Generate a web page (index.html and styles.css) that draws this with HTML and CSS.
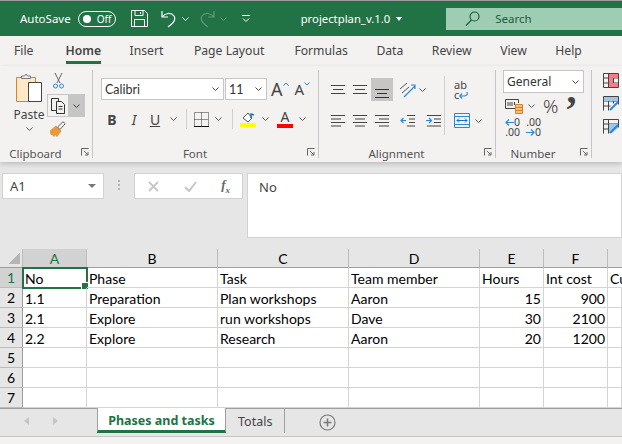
FILE: index.html
```html
<!DOCTYPE html>
<html lang="en">

<head>
  <meta charset="UTF-8">
  <title>projectplan_v.1.0</title>
  <link rel="stylesheet" href="styles.css">
</head>

<body>
  <div class="titlebar">
    <span class="autosave">AutoSave</span>
    <span class="toggle"><i class="toggle-dot"></i>Off</span>
    <svg class="ic-save" width="17" height="17" viewBox="0 0 17 17" fill="none" stroke="#fff"><path d="M.5.5h13l3 3v13H.5zM4 .5v5h8v-5M3.500 16.500v-7h10v7M9.500 2v2"/></svg>
    <svg class="ic-undo" width="16" height="18" viewBox="0 0 16 18" fill="none" stroke="#fff" stroke-width="1.2"><path d="M1 1v6h6M1 7c3-4 9-5 12-1 2 3 1 6-6 11"/></svg>
    <svg class="ic-chev" width="7" height="4" viewBox="0 0 7 4" fill="none" stroke="#fff"><path d="M.5.500l3 3 3-3"/></svg>
    <svg class="ic-redo" width="16" height="18" viewBox="0 0 16 18" fill="none" stroke="#5d9a79" stroke-width="1.200"><path d="M15 1v6H9M15 7C12 3 6 2 3 6c-2 3-1 6 6 11"/></svg>
    <svg class="ic-chev dim" width="7" height="4" viewBox="0 0 7 4" fill="none" stroke="#5d9a79"><path d="M.5.500l3 3 3-3"/></svg>
    <svg class="ic-qat" width="8" height="7" viewBox="0 0 8 7" fill="none" stroke="#fff"><path d="M0 .5h8M1 3.500l3 3 3-3"/></svg>
    <span class="doc-name">projectplan_v.1.0</span>
    <span class="caret"></span>
    <div class="search">
      <svg width="15" height="15" viewBox="0 0 15 15" fill="none" stroke="#1b5e3c" stroke-width="1.200"><circle cx="9.500" cy="5.500" r="4.500"/><path d="M6.500 9L1 14.500"/></svg>
      <span>Search</span>
    </div>
  </div>

  <div class="tabs">
    <span>File</span>
    <span class="active">Home</span>
    <span>Insert</span>
    <span class="page-layout">Page Layout</span>
    <span class="formulas">Formulas</span>
    <span>Data</span>
    <span>Review</span>
    <span>View</span>
    <span>Help</span>
  </div>

  <div class="ribbon">
    <section class="group clipboard">
      <div class="clip-body">
        <div class="paste">
          <svg width="28" height="30" viewBox="0 0 28 30"><path d="M1.500 4.500h19v24h-19z" fill="#fde9c8" stroke="#d98324"/><path d="M6.500 5.500V3h3l1.500-2 1.500 2h3v2.500z" fill="#f3f2f1" stroke="#777"/><path d="M13.500 9.500h13v19h-13z" fill="#fff" stroke="#444"/></svg>
          <span>Paste</span>
          <svg width="7" height="4" viewBox="0 0 7 4" fill="none" stroke="#555"><path d="M.5.500l3 3 3-3"/></svg>
        </div>
        <div class="clip-tools">
          <svg class="scissors" width="11" height="16" viewBox="0 0 11 16" fill="none"><path d="M2 0l5 10M9 0L4 10" stroke="#666"/><circle cx="2.500" cy="13" r="2" stroke="#2b88d8"/><circle cx="8.500" cy="13" r="2" stroke="#2b88d8"/></svg>
          <div class="copy">
            <span class="copy-main"><svg width="16" height="16" viewBox="0 0 16 16" fill="none" stroke="#333"><path d="M7 12.500H1.500V.5h7v3M6.500 3.500h5l3 3v9h-8zM8.500 8.500h4M8.500 11h4"/></svg></span>
            <span class="copy-drop"><svg width="7" height="4" viewBox="0 0 7 4" fill="none" stroke="#444"><path d="M.5.500l3 3 3-3"/></svg></span>
          </div>
          <svg class="brush" width="16" height="16" viewBox="0 0 16 16"><path d="M0 10l6-5 5 5-4 5.500-2-2-1 2-2-2H1z" fill="#ed9a35" stroke="#d98324" stroke-width=".6"/><path d="M7.500 6L13 .8l2.200 2L10 8.500z" fill="#f3f2f1" stroke="#666"/></svg>
        </div>
      </div>
      <div class="group-foot"><b>Clipboard</b><svg class="launch" width="8" height="8" viewBox="0 0 8 8" fill="none" stroke="#666"><path d="M.5 7.500V.5h7M3 3l4 4M7 4v3H4"/></svg></div>
    </section>

    <section class="group font">
      <div class="font-body">
        <div class="font-row-1">
          <div class="field name-field">Calibri<svg width="7" height="4" viewBox="0 0 7 4" fill="none" stroke="#444"><path d="M.5.500l3 3 3-3"/></svg></div>
          <div class="field size-field">11<svg width="7" height="4" viewBox="0 0 7 4" fill="none" stroke="#444"><path d="M.5.500l3 3 3-3"/></svg></div>
          <span class="grow">A<svg width="6" height="4" viewBox="0 0 6 4" fill="none" stroke="#2b88d8"><path d="M.5 3.500L3 1l2.500 2.500"/></svg></span>
          <span class="shrink">A<svg width="6" height="4" viewBox="0 0 6 4" fill="none" stroke="#2b88d8"><path d="M.5.500L3 3 5.500.5"/></svg></span>
        </div>
        <div class="font-row-2">
          <span class="fmt bold">B</span>
          <span class="fmt italic">I</span>
          <span class="fmt under">U</span>
          <svg width="7" height="4" viewBox="0 0 7 4" fill="none" stroke="#555"><path d="M.5.500l3 3 3-3"/></svg>
          <i class="vsep"></i>
          <svg width="15" height="15" viewBox="0 0 15 15" fill="none" stroke="#333" stroke-dasharray="1 1"><path d="M.5.5h14v14H.5zM7.500.5v14M.5 7.500h14"/><path d="M0 14.500h15" stroke="#111" stroke-dasharray="none"/></svg>
          <svg width="7" height="4" viewBox="0 0 7 4" fill="none" stroke="#555"><path d="M.5.500l3 3 3-3"/></svg>
          <i class="vsep"></i>
          <svg width="16" height="16" viewBox="0 0 16 16"><path d="M3 7l5-5 4 5-4 4z" fill="#fff" stroke="#555"/><path d="M11 7V3l3 1" fill="none" stroke="#1f6fb5" stroke-width="1.500"/><path d="M0 12h16v4H0z" fill="#ff0"/></svg>
          <svg width="7" height="4" viewBox="0 0 7 4" fill="none" stroke="#555"><path d="M.5.500l3 3 3-3"/></svg>
          <span class="color-a">A<i></i></span>
          <svg width="7" height="4" viewBox="0 0 7 4" fill="none" stroke="#555"><path d="M.5.500l3 3 3-3"/></svg>
        </div>
      </div>
      <div class="group-foot"><b>Font</b><svg class="launch" width="8" height="8" viewBox="0 0 8 8" fill="none" stroke="#666"><path d="M.5 7.500V.5h7M3 3l4 4M7 4v3H4"/></svg></div>
    </section>

    <section class="group alignment">
      <div class="align-body">
        <div class="align-grid">
          <div class="align-row top">
            <span class="lines"><svg width="14" height="10" viewBox="0 0 14 10" fill="none" stroke="#444"><path d="M0 .5h14M2 4.500h10M0 8.500h14"/></svg></span>
            <span class="lines"><svg width="14" height="10" viewBox="0 0 14 10" fill="none" stroke="#444"><path d="M0 .5h14M2 4.500h10M0 8.500h14"/></svg></span>
            <span class="lines on"><svg width="14" height="10" viewBox="0 0 14 10" fill="none" stroke="#333"><path d="M0 .5h14M2 4.500h10M0 8.500h14"/></svg></span>
            <svg class="orient" width="17" height="17" viewBox="0 0 17 17" fill="none"><path d="M1 8l7-6M3 12l7-6" stroke="#555"/><path d="M5 16L16 5M12 4h4v4" stroke="#2b88d8" stroke-width="1.200"/></svg>
            <svg class="orient-drop" width="7" height="4" viewBox="0 0 7 4" fill="none" stroke="#555"><path d="M.5.500l3 3 3-3"/></svg>
          </div>
          <div class="align-row">
            <span class="lines"><svg width="14" height="12" viewBox="0 0 14 12" fill="none" stroke="#444"><path d="M0 .5h14M0 4h10M0 7.500h14M0 11h10"/></svg></span>
            <span class="lines"><svg width="14" height="12" viewBox="0 0 14 12" fill="none" stroke="#444"><path d="M0 .5h14M2 4h10M0 7.500h14M2 11h10"/></svg></span>
            <span class="lines"><svg width="14" height="12" viewBox="0 0 14 12" fill="none" stroke="#444"><path d="M0 .5h14M4 4h10M0 7.500h14M4 11h10"/></svg></span>
            <span class="lines wide"><svg width="15" height="12" viewBox="0 0 15 12" fill="none"><path d="M7 .5h8M7 11h8M9 4h6M9 7.500h6" stroke="#444"/><path d="M6 5.500H1M3.500 3L1 5.500 3.500 8" stroke="#2b88d8" stroke-width="1.200"/></svg></span>
            <span class="lines"><svg width="15" height="12" viewBox="0 0 15 12" fill="none"><path d="M1 .5h14M1 11h14M8 4h7M8 7.500h7" stroke="#444"/><path d="M0 5.500h5M3 3l2.500 2.500L3 8" stroke="#2b88d8" stroke-width="1.200"/></svg></span>
          </div>
        </div>
        <i class="vsep tall"></i>
        <div class="wrap-col">
          <span class="wrap-text"><span>ab</span><span>c<svg width="9" height="7" viewBox="0 0 9 7" fill="none" stroke="#2b88d8" stroke-width="1.200"><path d="M8 0c1 3-1 4-3 4H1M3 1.500L.8 4 3 6.500"/></svg></span></span>
          <div class="merge">
            <svg width="16" height="15" viewBox="0 0 16 15" fill="none"><path d="M.5.5h15v14H.5z" stroke="#2b88d8"/><path d="M.5 3.500h15M.5 11.500h15" stroke="#2b88d8"/><path d="M3 7.500h10M5 5.500l-2 2 2 2M11 5.500l2 2-2 2" stroke="#1f6fb5"/></svg>
            <svg width="7" height="4" viewBox="0 0 7 4" fill="none" stroke="#555"><path d="M.5.500l3 3 3-3"/></svg>
          </div>
        </div>
      </div>
      <div class="group-foot"><b>Alignment</b><svg class="launch" width="8" height="8" viewBox="0 0 8 8" fill="none" stroke="#666"><path d="M.5 7.500V.5h7M3 3l4 4M7 4v3H4"/></svg></div>
    </section>

    <section class="group number">
      <div class="number-body">
        <div class="field format-field">General<svg width="7" height="4" viewBox="0 0 7 4" fill="none" stroke="#444"><path d="M.5.500l3 3 3-3"/></svg></div>
        <div class="number-row">
          <svg class="currency" width="18" height="15" viewBox="0 0 18 15" fill="none"><path d="M11 9.500H.5v-9h13V4" stroke="#444"/><path d="M3 3v4M5 3v4M7 3v4M9.500 3v3" stroke="#444"/><path d="M10.500 5.500h7v9h-7z" fill="#f7bd7c" stroke="#d98324"/><path d="M10.500 8.500h7M10.500 11.500h7" stroke="#d98324"/></svg>
          <svg class="cur-drop" width="7" height="4" viewBox="0 0 7 4" fill="none" stroke="#555"><path d="M.5.500l3 3 3-3"/></svg>
          <span class="percent">%</span>
          <span class="comma">,</span>
        </div>
        <div class="number-row dec">
          <span class="decimals"><em><svg width="9" height="7" viewBox="0 0 9 7" fill="none" stroke="#2b88d8" stroke-width="1.200"><path d="M9 3.500H1M4 .5l-3 3 3 3"/></svg>0</em><em>.00</em></span>
          <span class="decimals"><em>.00</em><em><svg width="9" height="7" viewBox="0 0 9 7" fill="none" stroke="#2b88d8" stroke-width="1.200"><path d="M0 3.500h8M5 .5l3 3-3 3"/></svg>0</em></span>
        </div>
      </div>
      <div class="group-foot"><b>Number</b><svg class="launch" width="8" height="8" viewBox="0 0 8 8" fill="none" stroke="#666"><path d="M.5 7.500V.5h7M3 3l4 4M7 4v3H4"/></svg></div>
    </section>

    <section class="group styles">
      <svg width="16" height="15" viewBox="0 0 16 15" fill="none"><path d="M.5.5h15v14H.5zM.5 5h15M.5 10h15M5.500.5v14M10.500.5v14" stroke="#444"/><path d="M6 1h9v4H6zM6 10h9v4H6z" fill="#f47c86"/><path d="M6 5h4v5H6z" fill="#f47c86"/></svg>
      <svg width="16" height="15" viewBox="0 0 16 15" fill="none"><path d="M.5 14.500V.5h15v8M.5 5h15M.5 10h7M5.500.5v14M10.500.5v7" stroke="#444"/><path d="M1 1h14v4H1z" fill="#9dc6e8"/><path d="M7 14l8-8" stroke="#2b88d8" stroke-width="2"/></svg>
      <svg width="16" height="15" viewBox="0 0 16 15" fill="none"><path d="M.5 14.500V.5h15v8M.5 5h15M.5 10h7M5.500.5v14" stroke="#444"/><path d="M6 5h9v4l-6 5H6z" fill="#9dc6e8"/><path d="M7 14l8-8" stroke="#2b88d8" stroke-width="2"/></svg>
    </section>
  </div>

  <div class="formula-bar">
    <div class="name-box">A1<i class="down"></i></div>
    <div class="grip"><i></i><i></i><i></i></div>
    <div class="fx-box">
      <svg width="11" height="11" viewBox="0 0 11 11" fill="none" stroke="#c6c6c6" stroke-width="1.800"><path d="M1 1l9 9M10 1l-9 9"/></svg>
      <svg width="13" height="11" viewBox="0 0 13 11" fill="none" stroke="#c6c6c6" stroke-width="2"><path d="M1 6l4 4 7-9"/></svg>
      <span class="fx">f<sub>x</sub></span>
    </div>
    <div class="formula-input">No</div>
  </div>

  <div class="sheet">
    <div class="corner"><i></i></div>
    <div class="col current">A</div>
    <div class="col">B</div>
    <div class="col">C</div>
    <div class="col">D</div>
    <div class="col">E</div>
    <div class="col">F</div>
    <div class="col last"></div>

    <div class="row-head current">1</div>
    <div class="cell selected">No</div>
    <div class="cell">Phase</div>
    <div class="cell">Task</div>
    <div class="cell">Team member</div>
    <div class="cell">Hours</div>
    <div class="cell">Int cost</div>
    <div class="cell clip">Cu</div>

    <div class="row-head">2</div>
    <div class="cell">1.1</div>
    <div class="cell">Preparation</div>
    <div class="cell">Plan workshops</div>
    <div class="cell">Aaron</div>
    <div class="cell num">15</div>
    <div class="cell num">900</div>
    <div class="cell"></div>

    <div class="row-head">3</div>
    <div class="cell">2.1</div>
    <div class="cell">Explore</div>
    <div class="cell">run workshops</div>
    <div class="cell">Dave</div>
    <div class="cell num">30</div>
    <div class="cell num">2100</div>
    <div class="cell"></div>

    <div class="row-head">4</div>
    <div class="cell">2.2</div>
    <div class="cell">Explore</div>
    <div class="cell">Research</div>
    <div class="cell">Aaron</div>
    <div class="cell num">20</div>
    <div class="cell num">1200</div>
    <div class="cell"></div>

    <div class="row-head">5</div>
    <div class="cell"></div><div class="cell"></div><div class="cell"></div><div class="cell"></div><div class="cell"></div><div class="cell"></div><div class="cell"></div>
    <div class="row-head">6</div>
    <div class="cell"></div><div class="cell"></div><div class="cell"></div><div class="cell"></div><div class="cell"></div><div class="cell"></div><div class="cell"></div>
    <div class="row-head">7</div>
    <div class="cell"></div><div class="cell"></div><div class="cell"></div><div class="cell"></div><div class="cell"></div><div class="cell"></div><div class="cell"></div>
  </div>

  <div class="sheet-tabs">
    <div class="nav">
      <svg width="5" height="8" viewBox="0 0 5 8"><path d="M5 0v8L0 4z" fill="#c6c6c6"/></svg>
      <svg width="5" height="8" viewBox="0 0 5 8"><path d="M0 0v8l5-4z" fill="#c6c6c6"/></svg>
    </div>
    <div class="sheet-tab on">Phases and tasks</div>
    <div class="sheet-tab">Totals</div>
    <svg class="add" width="17" height="17" viewBox="0 0 17 17" fill="none" stroke="#7a7a7a"><circle cx="8.500" cy="8.500" r="7.500" stroke-width="1.200"/><path d="M8.500 4.500v8M4.500 8.500h8" stroke-width="1.600"/></svg>
  </div>
  <div class="statusbar"></div>
</body>

</html>
```

FILE: styles.css
```css
* {
  box-sizing: border-box;
}

body {
  margin: 0;
  height: 444px;
  overflow: hidden;
  background: #e6e6e6;
  font-family: "Noto Sans", sans-serif;
  color: #444;
}

i,
em {
  font-style: normal;
}

/* title bar */
.titlebar {
  display: flex;
  align-items: center;
  height: 36px;
  padding-left: 20px;
  background: #217346;
  border-top: 1px solid #9c9c9c;
  color: #fff;
  font-size: 11.500px;
}

.toggle {
  display: flex;
  align-items: center;
  flex: none;
  width: 38px;
  height: 16px;
  margin-left: 7px;
  padding-left: 4px;
  border: 1px solid #fff;
  border-radius: 8px;
  font-size: 10px;
}

.toggle-dot {
  width: 8px;
  height: 8px;
  margin-right: 6px;
  border-radius: 50%;
  background: #fff;
}

.ic-save {
  margin-left: 15px;
}

.ic-undo {
  margin-left: 13px;
}

.ic-chev {
  margin-left: 5px;
}

.ic-redo {
  margin-left: 10px;
}

.ic-qat {
  margin-left: 15px;
}

.doc-name {
  margin-left: 51px;
  font-size: 11.300px;
}

.caret {
  width: 0;
  height: 0;
  margin-left: 6px;
  border: 3px solid transparent;
  border-top: 4px solid #fff;
  border-bottom: 0;
}

.search {
  display: flex;
  align-items: center;
  gap: 15px;
  flex: 1;
  height: 22px;
  margin-left: 44px;
  padding-left: 19px;
  background: #9fcdb3;
  color: #1b5e3c;
}

/* ribbon tabs */
.tabs {
  display: flex;
  gap: 28.500px;
  height: 30px;
  padding: 6px 0 0 14px;
  background: #f3f2f1;
  font-size: 12.200px;
}

.tabs span {
  height: 22px;
  line-height: 18px;
}

.tabs .active {
  margin-left: 3.500px;
  font-weight: 600;
  border-bottom: 3px solid #217346;
}

.tabs .page-layout {
  margin-left: 2px;
}

.tabs .formulas {
  margin-left: 1.500px;
}

/* ribbon */
.ribbon {
  display: flex;
  height: 96px;
  padding-top: 4px;
  background: #f3f2f1;
  box-shadow: 0 2px 5px rgba(0, 0, 0, .18);
  position: relative;
  font-size: 12px;
}

.group {
  display: flex;
  flex-direction: column;
  height: 88px;
  border-right: 1px solid #c6c6c6;
}

.group-foot {
  display: grid;
  grid-template-columns: 1fr 18px;
  align-items: center;
  height: 16px;
  margin: auto 0 -3px;
  padding-right: 3px;
}

.group-foot b {
  justify-self: center;
  font-weight: 400;
  font-size: 11.500px;
  color: #555;
}

.launch {
  justify-self: end;
  margin-top: -3px;
}

.clipboard {
  width: 93px;
}

.clip-body {
  display: flex;
  padding: 3px 0 0 14px;
}

.paste {
  display: flex;
  flex-direction: column;
  align-items: center;
  width: 30px;
  gap: 4px;
}

.paste span {
  line-height: 16px;
}

.clip-tools {
  display: flex;
  flex-direction: column;
  align-items: flex-start;
  margin-left: 3px;
}

.scissors {
  margin-left: 6px;
}

.copy {
  display: flex;
  width: 38px;
  height: 23px;
  margin-top: 5px;
}

.copy-main {
  display: flex;
  align-items: center;
  justify-content: center;
  width: 21px;
  border: 1px solid #c6c6c6;
  border-right: 0;
}

.copy-drop {
  display: flex;
  align-items: center;
  justify-content: center;
  flex: 1;
  background: #c6c6c6;
}

.brush {
  margin: 4px 0 0 3px;
}

.font {
  width: 226px;
}

.font-body {
  padding: 8px 0 0 8px;
}

.font-row-1 {
  display: flex;
  align-items: center;
  height: 22px;
}

.field {
  display: flex;
  align-items: center;
  justify-content: space-between;
  height: 22px;
  padding: 0 4px 0 3px;
  background: #fff;
  border: 1px solid #c6c6c6;
  color: #333;
}

.name-field,
.size-field {
  font-family: Lato, sans-serif;
  font-size: 12.500px;
}

.name-field {
  width: 123px;
}

.size-field {
  width: 42px;
  margin-left: 1px;
}

.grow,
.shrink {
  display: flex;
  align-items: flex-start;
  line-height: 22px;
  color: #444;
}

.grow {
  margin-left: 4px;
  font-size: 18px;
}

.shrink {
  margin-left: 6px;
  font-size: 15px;
}

.grow svg,
.shrink svg {
  margin-top: 4px;
}

.font-row-2 {
  display: grid;
  grid-template-columns: 22px 22px 20px 16px 11px 18px 16px 12px 20px 14px 26px 9px;
  align-items: center;
  justify-items: center;
  height: 22px;
  margin-top: 8px;
}

.fmt {
  font-size: 14px;
  color: #444;
}

.bold {
  font-weight: 700;
}

.italic {
  font-style: italic;
}

.under {
  text-decoration: underline;
}

.vsep {
  width: 1px;
  height: 20px;
  background: #d2d0ce;
}

.color-a {
  display: flex;
  flex-direction: column;
  align-items: center;
  width: 16px;
  font-size: 14px;
  line-height: 14px;
}

.color-a i {
  width: 16px;
  height: 4px;
  background: #f00;
}

.alignment {
  width: 177px;
}

.align-body {
  display: flex;
  padding: 8px 0 0 8px;
}

.align-row {
  display: flex;
  align-items: center;
  height: 23px;
}

.align-row + .align-row {
  margin-top: 8px;
}

.lines {
  display: flex;
  align-items: center;
  justify-content: center;
  width: 22px;
  height: 23px;
}

.lines.on {
  background: #c6c6c6;
}

.lines.on svg {
  margin-top: 8px;
}

.lines.wide {
  width: 29px;
}

.orient {
  margin-left: 6px;
}

.orient-drop {
  margin-left: 3px;
}

.vsep.tall {
  flex: none;
  height: 59px;
  margin-top: -2px;
}

.wrap-col {
  display: flex;
  flex-direction: column;
  padding-left: 9px;
}

.wrap-text {
  display: flex;
  flex-direction: column;
  height: 30px;
  font-size: 11px;
  line-height: 10px;
  padding-top: 2px;
}

.merge {
  display: flex;
  align-items: center;
  gap: 5px;
  margin-top: 5px;
}

.number {
  width: 96px;
}

.number-body {
  padding: 0 0 0 7px;
}

.format-field {
  width: 81px;
  height: 23px;
}

.number-row {
  display: flex;
  align-items: center;
  height: 20px;
  margin-top: 3px;
  padding-left: 2px;
}

.number-row.dec {
  margin-top: 0;
  height: 22px;
  gap: 6px;
}

.cur-drop {
  margin-left: 5px;
}

.percent {
  margin-left: 8px;
  font-size: 19px;
  line-height: 20px;
  font-weight: 300;
}

.comma {
  align-self: flex-start;
  margin: -16px 0 0 8px;
  font-family: "Liberation Serif", serif;
  font-size: 40px;
  font-weight: 700;
  line-height: 20px;
}

.decimals {
  display: flex;
  flex-direction: column;
  align-items: flex-end;
  font-size: 10.500px;
  line-height: 10px;
}

.styles {
  flex: 1;
  gap: 8px;
  padding: 3px 0 0 11px;
  border-right: 0;
}

/* formula bar */
.formula-bar {
  display: flex;
  align-items: flex-start;
  height: 87px;
  padding: 11px 0 0 2px;
  background: #e6e6e6;
}

.name-box {
  display: flex;
  align-items: center;
  justify-content: space-between;
  width: 102px;
  height: 26px;
  padding: 0 7px;
  background: #fff;
  border: 1px solid #d2d2d2;
  font-size: 13px;
}

.down {
  border: 4px solid transparent;
  border-top: 4px solid #777;
  border-bottom: 0;
}

.grip {
  display: flex;
  flex-direction: column;
  gap: 2px;
  width: 30px;
  padding: 7px 0 0 14px;
}

.grip i {
  width: 2px;
  height: 2px;
  background: #b5b5b5;
}

.fx-box {
  display: flex;
  align-items: center;
  justify-content: space-between;
  width: 109px;
  height: 26px;
  padding: 0 12px 0 13px;
  background: #fff;
  border: 1px solid #d2d2d2;
}

.fx {
  font: italic 700 13px "Liberation Serif", serif;
  color: #666;
}

.fx sub {
  font-size: 9px;
}

.formula-input {
  width: 375px;
  height: 65px;
  margin-left: 4px;
  padding: 4px 11px;
  background: #fff;
  border: 1px solid #d2d2d2;
  font-size: 13px;
}

/* sheet */
.sheet {
  display: grid;
  grid-template-columns: 23px 64px 131px 131px 131px 64px 64px 14px;
  grid-template-rows: 19px repeat(7, 20px);
  height: 159px;
  background: #fff;
  font-family: Lato, sans-serif;
  font-size: 14px;
  color: #000;
}

.corner {
  display: flex;
  align-items: flex-end;
  justify-content: flex-end;
  padding: 0 2px 3px 0;
  background: #e6e6e6;
  border-right: 1px solid #bcbcbc;
  border-bottom: 1px solid #9e9e9e;
}

.corner i {
  width: 11px;
  height: 11px;
  background: linear-gradient(135deg, transparent 50%, #b5b5b5 50%);
}

.col {
  display: flex;
  align-items: center;
  justify-content: center;
  background: #e6e6e6;
  border-right: 1px solid #bcbcbc;
  border-bottom: 1px solid #9e9e9e;
}

.col.current {
  background: #d2d2d2;
  color: #217346;
  border-bottom: 1px solid #217346;
}

.col.last {
  border-right: 0;
}

.row-head {
  display: flex;
  align-items: center;
  justify-content: center;
  background: #e6e6e6;
  border-right: 1px solid #9e9e9e;
  border-bottom: 1px solid #bcbcbc;
}

.row-head.current {
  background: #d2d2d2;
  color: #217346;
}

.cell {
  position: relative;
  padding: 0 2px;
  line-height: 22px;
  white-space: nowrap;
  overflow: hidden;
  border-right: 1px solid #d4d4d4;
  border-bottom: 1px solid #d4d4d4;
}

.cell.num {
  text-align: right;
}

.cell.clip {
  border-right: 0;
}

.cell.selected {
  overflow: visible;
  outline: 2px solid #217346;
  outline-offset: -1px;
}

.cell.selected::after {
  content: "";
  position: absolute;
  right: -3px;
  bottom: -3px;
  width: 6px;
  height: 6px;
  background: #217346;
  border: 1px solid #fff;
}

/* sheet tabs */
.sheet-tabs {
  display: flex;
  align-items: flex-start;
  height: 29px;
  background: #e6e6e6;
  border-top: 1px solid #9e9e9e;
  border-bottom: 1px solid #c6c6c6;
  font-size: 12.500px;
}

.nav {
  display: flex;
  align-items: center;
  gap: 24px;
  width: 97px;
  height: 24px;
  padding-left: 24px;
}

.sheet-tab {
  height: 24px;
  padding: 0 12px;
  line-height: 26px;
  border-right: 1px solid #9e9e9e;
}

.sheet-tab.on {
  width: 129px;
  margin-top: -1px;
  height: 25px;
  padding: 0;
  background: #fff;
  border: 0;
  border-left: 1px solid #9e9e9e;
  border-right: 1px solid #9e9e9e;
  border-bottom: 3px solid #217346;
  color: #217346;
  font-weight: 700;
  text-align: center;
}

.add {
  margin: 5px 0 0 34px;
}

.statusbar {
  height: 8px;
  background: #f3f2f1;
}
```
